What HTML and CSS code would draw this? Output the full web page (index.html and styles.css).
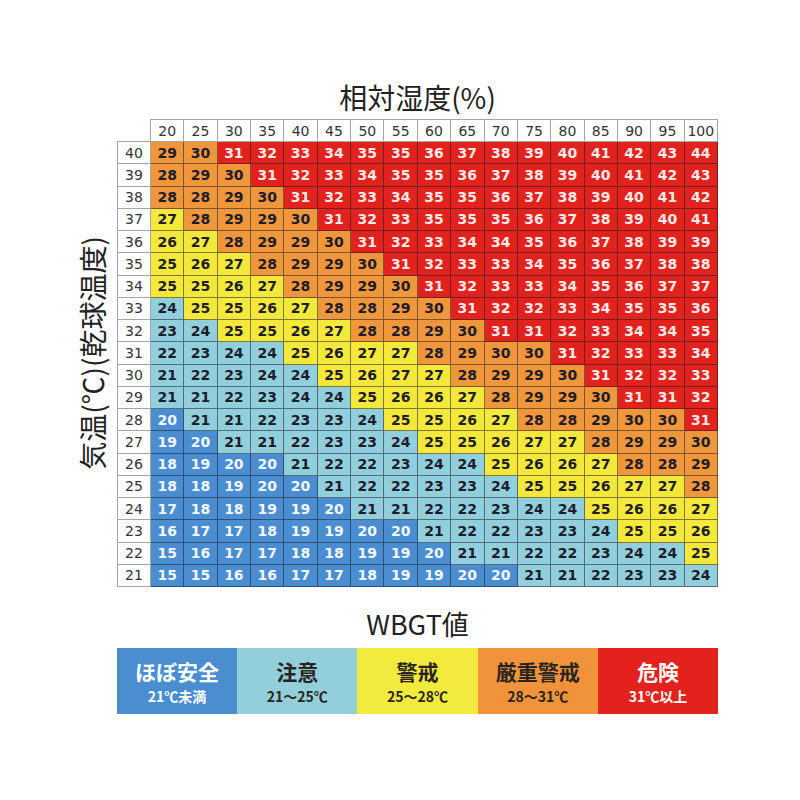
FILE: index.html
```html
<!DOCTYPE html>
<html lang="ja">
<head>
<meta charset="utf-8">
<title>WBGT値 早見表</title>
<link rel="stylesheet" href="styles.css">
</head>
<body>
<div class="chart">
  <div class="title">相対湿度(%)</div>
  <div class="ylabel"><span class="ylabel-text">気温(℃)(乾球温度)</span></div>
  <div class="grid">
    <div class="corner"></div>
    <div class="hd">20</div><div class="hd">25</div><div class="hd">30</div><div class="hd">35</div><div class="hd">40</div><div class="hd">45</div><div class="hd">50</div><div class="hd">55</div><div class="hd">60</div><div class="hd">65</div><div class="hd">70</div><div class="hd">75</div><div class="hd">80</div><div class="hd">85</div><div class="hd">90</div><div class="hd">95</div><div class="hd">100</div>

    <div class="rl">40</div>
    <div class="c o">29</div><div class="c o">30</div><div class="c r">31</div><div class="c r">32</div><div class="c r">33</div><div class="c r">34</div><div class="c r">35</div><div class="c r">35</div><div class="c r">36</div><div class="c r">37</div><div class="c r">38</div><div class="c r">39</div><div class="c r">40</div><div class="c r">41</div><div class="c r">42</div><div class="c r">43</div><div class="c r">44</div>

    <div class="rl">39</div>
    <div class="c o">28</div><div class="c o">29</div><div class="c o">30</div><div class="c r">31</div><div class="c r">32</div><div class="c r">33</div><div class="c r">34</div><div class="c r">35</div><div class="c r">35</div><div class="c r">36</div><div class="c r">37</div><div class="c r">38</div><div class="c r">39</div><div class="c r">40</div><div class="c r">41</div><div class="c r">42</div><div class="c r">43</div>

    <div class="rl">38</div>
    <div class="c o">28</div><div class="c o">28</div><div class="c o">29</div><div class="c o">30</div><div class="c r">31</div><div class="c r">32</div><div class="c r">33</div><div class="c r">34</div><div class="c r">35</div><div class="c r">35</div><div class="c r">36</div><div class="c r">37</div><div class="c r">38</div><div class="c r">39</div><div class="c r">40</div><div class="c r">41</div><div class="c r">42</div>

    <div class="rl">37</div>
    <div class="c y">27</div><div class="c o">28</div><div class="c o">29</div><div class="c o">29</div><div class="c o">30</div><div class="c r">31</div><div class="c r">32</div><div class="c r">33</div><div class="c r">35</div><div class="c r">35</div><div class="c r">35</div><div class="c r">36</div><div class="c r">37</div><div class="c r">38</div><div class="c r">39</div><div class="c r">40</div><div class="c r">41</div>

    <div class="rl">36</div>
    <div class="c y">26</div><div class="c y">27</div><div class="c o">28</div><div class="c o">29</div><div class="c o">29</div><div class="c o">30</div><div class="c r">31</div><div class="c r">32</div><div class="c r">33</div><div class="c r">34</div><div class="c r">34</div><div class="c r">35</div><div class="c r">36</div><div class="c r">37</div><div class="c r">38</div><div class="c r">39</div><div class="c r">39</div>

    <div class="rl">35</div>
    <div class="c y">25</div><div class="c y">26</div><div class="c y">27</div><div class="c o">28</div><div class="c o">29</div><div class="c o">29</div><div class="c o">30</div><div class="c r">31</div><div class="c r">32</div><div class="c r">33</div><div class="c r">33</div><div class="c r">34</div><div class="c r">35</div><div class="c r">36</div><div class="c r">37</div><div class="c r">38</div><div class="c r">38</div>

    <div class="rl">34</div>
    <div class="c y">25</div><div class="c y">25</div><div class="c y">26</div><div class="c y">27</div><div class="c o">28</div><div class="c o">29</div><div class="c o">29</div><div class="c o">30</div><div class="c r">31</div><div class="c r">32</div><div class="c r">33</div><div class="c r">33</div><div class="c r">34</div><div class="c r">35</div><div class="c r">36</div><div class="c r">37</div><div class="c r">37</div>

    <div class="rl">33</div>
    <div class="c l">24</div><div class="c y">25</div><div class="c y">25</div><div class="c y">26</div><div class="c y">27</div><div class="c o">28</div><div class="c o">28</div><div class="c o">29</div><div class="c o">30</div><div class="c r">31</div><div class="c r">32</div><div class="c r">32</div><div class="c r">33</div><div class="c r">34</div><div class="c r">35</div><div class="c r">35</div><div class="c r">36</div>

    <div class="rl">32</div>
    <div class="c l">23</div><div class="c l">24</div><div class="c y">25</div><div class="c y">25</div><div class="c y">26</div><div class="c y">27</div><div class="c o">28</div><div class="c o">28</div><div class="c o">29</div><div class="c o">30</div><div class="c r">31</div><div class="c r">31</div><div class="c r">32</div><div class="c r">33</div><div class="c r">34</div><div class="c r">34</div><div class="c r">35</div>

    <div class="rl">31</div>
    <div class="c l">22</div><div class="c l">23</div><div class="c l">24</div><div class="c l">24</div><div class="c y">25</div><div class="c y">26</div><div class="c y">27</div><div class="c y">27</div><div class="c o">28</div><div class="c o">29</div><div class="c o">30</div><div class="c o">30</div><div class="c r">31</div><div class="c r">32</div><div class="c r">33</div><div class="c r">33</div><div class="c r">34</div>

    <div class="rl">30</div>
    <div class="c l">21</div><div class="c l">22</div><div class="c l">23</div><div class="c l">24</div><div class="c l">24</div><div class="c y">25</div><div class="c y">26</div><div class="c y">27</div><div class="c y">27</div><div class="c o">28</div><div class="c o">29</div><div class="c o">29</div><div class="c o">30</div><div class="c r">31</div><div class="c r">32</div><div class="c r">32</div><div class="c r">33</div>

    <div class="rl">29</div>
    <div class="c l">21</div><div class="c l">21</div><div class="c l">22</div><div class="c l">23</div><div class="c l">24</div><div class="c l">24</div><div class="c y">25</div><div class="c y">26</div><div class="c y">26</div><div class="c y">27</div><div class="c o">28</div><div class="c o">29</div><div class="c o">29</div><div class="c o">30</div><div class="c r">31</div><div class="c r">31</div><div class="c r">32</div>

    <div class="rl">28</div>
    <div class="c b">20</div><div class="c l">21</div><div class="c l">21</div><div class="c l">22</div><div class="c l">23</div><div class="c l">23</div><div class="c l">24</div><div class="c y">25</div><div class="c y">25</div><div class="c y">26</div><div class="c y">27</div><div class="c o">28</div><div class="c o">28</div><div class="c o">29</div><div class="c o">30</div><div class="c o">30</div><div class="c r">31</div>

    <div class="rl">27</div>
    <div class="c b">19</div><div class="c b">20</div><div class="c l">21</div><div class="c l">21</div><div class="c l">22</div><div class="c l">23</div><div class="c l">23</div><div class="c l">24</div><div class="c y">25</div><div class="c y">25</div><div class="c y">26</div><div class="c y">27</div><div class="c y">27</div><div class="c o">28</div><div class="c o">29</div><div class="c o">29</div><div class="c o">30</div>

    <div class="rl">26</div>
    <div class="c b">18</div><div class="c b">19</div><div class="c b">20</div><div class="c b">20</div><div class="c l">21</div><div class="c l">22</div><div class="c l">22</div><div class="c l">23</div><div class="c l">24</div><div class="c l">24</div><div class="c y">25</div><div class="c y">26</div><div class="c y">26</div><div class="c y">27</div><div class="c o">28</div><div class="c o">28</div><div class="c o">29</div>

    <div class="rl">25</div>
    <div class="c b">18</div><div class="c b">18</div><div class="c b">19</div><div class="c b">20</div><div class="c b">20</div><div class="c l">21</div><div class="c l">22</div><div class="c l">22</div><div class="c l">23</div><div class="c l">23</div><div class="c l">24</div><div class="c y">25</div><div class="c y">25</div><div class="c y">26</div><div class="c y">27</div><div class="c y">27</div><div class="c o">28</div>

    <div class="rl">24</div>
    <div class="c b">17</div><div class="c b">18</div><div class="c b">18</div><div class="c b">19</div><div class="c b">19</div><div class="c b">20</div><div class="c l">21</div><div class="c l">21</div><div class="c l">22</div><div class="c l">22</div><div class="c l">23</div><div class="c l">24</div><div class="c l">24</div><div class="c y">25</div><div class="c y">26</div><div class="c y">26</div><div class="c y">27</div>

    <div class="rl">23</div>
    <div class="c b">16</div><div class="c b">17</div><div class="c b">17</div><div class="c b">18</div><div class="c b">19</div><div class="c b">19</div><div class="c b">20</div><div class="c b">20</div><div class="c l">21</div><div class="c l">22</div><div class="c l">22</div><div class="c l">23</div><div class="c l">23</div><div class="c l">24</div><div class="c y">25</div><div class="c y">25</div><div class="c y">26</div>

    <div class="rl">22</div>
    <div class="c b">15</div><div class="c b">16</div><div class="c b">17</div><div class="c b">17</div><div class="c b">18</div><div class="c b">18</div><div class="c b">19</div><div class="c b">19</div><div class="c b">20</div><div class="c l">21</div><div class="c l">21</div><div class="c l">22</div><div class="c l">22</div><div class="c l">23</div><div class="c l">24</div><div class="c l">24</div><div class="c y">25</div>

    <div class="rl">21</div>
    <div class="c b">15</div><div class="c b">15</div><div class="c b">16</div><div class="c b">16</div><div class="c b">17</div><div class="c b">17</div><div class="c b">18</div><div class="c b">19</div><div class="c b">19</div><div class="c b">20</div><div class="c b">20</div><div class="c l">21</div><div class="c l">21</div><div class="c l">22</div><div class="c l">23</div><div class="c l">23</div><div class="c l">24</div>
  </div>

  <div class="wbgt-title">WBGT値</div>
  <div class="legend">
    <div class="lg lg-b"><span class="lg-main">ほぼ安全</span><span class="lg-sub">21℃未満</span></div>
    <div class="lg lg-l"><span class="lg-main">注意</span><span class="lg-sub">21～25℃</span></div>
    <div class="lg lg-y"><span class="lg-main">警戒</span><span class="lg-sub">25～28℃</span></div>
    <div class="lg lg-o"><span class="lg-main">厳重警戒</span><span class="lg-sub">28～31℃</span></div>
    <div class="lg lg-r"><span class="lg-main">危険</span><span class="lg-sub">31℃以上</span></div>
  </div>
</div>
</body>
</html>
```

FILE: styles.css
```css
html, body {
  margin: 0;
  padding: 0;
  background: #ffffff;
}

body {
  width: 800px;
  height: 800px;
  font-family: "Noto Sans CJK JP", "Noto Sans", sans-serif;
  color: #222;
}

.chart {
  display: grid;
  grid-template-columns: 117px 601px;
  padding-top: 81px;
}

.title {
  grid-column: 2;
  grid-row: 1;
  text-align: center;
  font-size: 28px;
  line-height: 32px;
  height: 32px;
  margin-bottom: 6px;
  color: #222;
}

.ylabel {
  grid-column: 1;
  grid-row: 2;
  display: flex;
  align-items: center;
  justify-content: flex-end;
  padding-right: 9px;
}

.ylabel-text {
  writing-mode: vertical-rl;
  text-orientation: sideways;
  transform: rotate(180deg);
  font-size: 28px;
  line-height: 32px;
  white-space: nowrap;
  color: #222;
}

.grid {
  grid-column: 2;
  grid-row: 2;
  display: grid;
  grid-template-columns: 34px repeat(17, 1fr);
  grid-template-rows: 23px;
  grid-auto-rows: 22.25px;
  width: 601px;
  font-family: "DejaVu Sans", Verdana, sans-serif;
}

.grid > div {
  box-sizing: border-box;
  display: flex;
  align-items: center;
  justify-content: center;
  font-size: 14px;
}

.corner {
  border-right: 1px solid #a5a5a5;
  border-bottom: 1px solid #a5a5a5;
}

.hd {
  background: #fff;
  color: #333;
  border-top: 1px solid #a5a5a5;
  border-right: 1px solid #a5a5a5;
  border-bottom: 1px solid #a5a5a5;
}

.rl {
  background: #fff;
  color: #333;
  border-left: 1px solid #a5a5a5;
  border-right: 1px solid #a5a5a5;
  border-bottom: 1px solid #a5a5a5;
}

.c {
  font-weight: bold;
  border-right: 1px solid rgba(30, 30, 40, 0.55);
  border-bottom: 1px solid rgba(30, 30, 40, 0.55);
  color: #1c1c2a;
}

.c.b { background: #4a8ed1; color: #f4f7ff; }
.c.l { background: #92cfdc; }
.c.y { background: #f4e83a; }
.c.o { background: #f0973c; }
.c.r { background: #e2221d; color: #fbeaea; }

.wbgt-title {
  grid-column: 2;
  grid-row: 3;
  text-align: center;
  font-size: 27px;
  line-height: 32px;
  margin-top: 21px;
  color: #222;
}

.legend {
  grid-column: 2;
  grid-row: 4;
  display: flex;
  width: 601px;
  height: 66px;
  margin-top: 8px;
}

.lg {
  flex: 1;
  display: flex;
  flex-direction: column;
  align-items: center;
  justify-content: center;
  font-weight: bold;
  color: #2a2420;
}

.lg-main {
  font-size: 21px;
  line-height: 30px;
}

.lg-sub {
  font-size: 14px;
  line-height: 20px;
}

.lg-b { background: #4a8ecf; color: #fff; }
.lg-l { background: #93cfdb; }
.lg-y { background: #f2ea3c; }
.lg-o { background: #f0933b; }
.lg-r { background: #e3221d; color: #fff; }
```
